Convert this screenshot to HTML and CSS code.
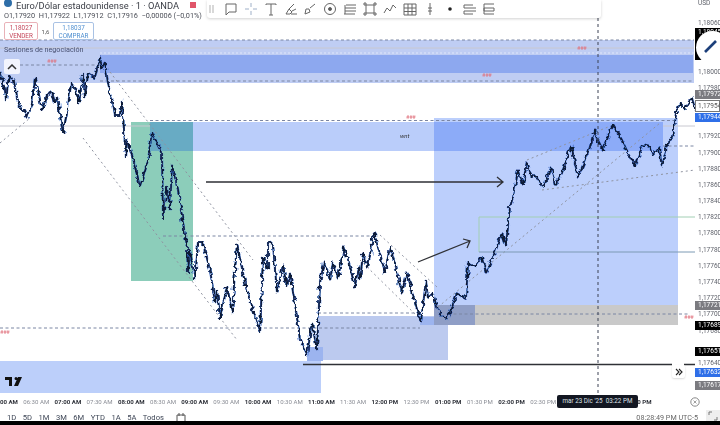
FILE: index.html
```html
<!DOCTYPE html>
<html lang="es">
<head>
<meta charset="utf-8">
<title>Euro/Dólar estadounidense</title>
<link rel="stylesheet" href="styles.css">
</head>
<body>
<div class="app">
  <div class="main">
    <div class="plot">
      <svg class="canvas" viewBox="0 0 695 395" width="695" height="395">
        <defs>
          <filter id="jag" filterUnits="userSpaceOnUse" x="0" y="0" width="695" height="395">
            <feTurbulence type="fractalNoise" baseFrequency="0.22" numOctaves="2" seed="4"/>
            <feDisplacementMap in="SourceGraphic" scale="6" xChannelSelector="R" yChannelSelector="G"/>
          </filter>
          <polyline id="price" fill="none" stroke-linejoin="bevel" points="0,72 5,90 6,100 9,75 13,83 15,80 17,98 21,110 24,110 27,118 32,103 35,78 38,90 42,110 47,95 52,92 55,103 57,97 63,133 68,107 71,83 75,88 79,103 83,75 85,97 88,73 95,78 100,57 102,68 105,62 108,83 110,93 113,102 115,115 120,115 122,100 124,130 126,158 127,140 132,155 140,187 148,160 152,132 157,143 162,153 163,220 167,187 170,210 172,165 178,190 183,223 187,247 188,273 190,250 195,280 198,243 203,243 210,270 215,303 217,290 220,318 227,287 232,313 237,243 245,283 260,333 263,257 268,270 268,243 273,245 277,293 283,265 287,287 290,273 297,317 300,340 307,355 312,323 317,350 320,283 324,262 330,280 333,262 338,278 344,247 350,267 355,287 358,267 360,280 363,253 368,267 374,232 378,247 385,273 390,247 395,263 402,293 407,272 415,303 421,322 426,280 428,298 433,293 438,310 447,320 457,293 466,298 468,263 475,267 482,257 486,273 492,260 498,243 502,233 506,245 510,207 513,197 518,170 523,185 527,162 532,178 535,175 543,188 551,167 555,185 562,173 571,145 578,177 588,153 595,130 598,140 603,150 608,137 613,125 622,140 628,153 635,165 643,145 650,147 653,155 659,147 662,167 668,142 673,138 676,113 680,103 685,108 692,97 695,110"/>
        </defs>

        <rect class="band-light" x="0" y="40" width="694" height="43"/>
        <rect class="band-deep" x="100" y="55" width="593" height="18"/>
        <rect class="big-blue" x="434" y="118" width="244" height="207"/>
        <rect class="lower-box" x="318" y="316" width="130" height="44"/>
        <rect class="grey-box" x="475" y="305" width="203" height="20"/>
        <rect class="grey-blue" x="434" y="305" width="41" height="20"/>
        <rect class="lower-deep" x="420" y="317" width="14" height="8"/>
        <rect class="green" x="131" y="122" width="62" height="159"/>
        <rect class="zone" x="193" y="122" width="241" height="29"/>
        <rect class="zone-green" x="150" y="122" width="43" height="29"/>
        <rect class="zone-deep" x="434" y="122" width="229" height="29"/>
        <rect class="bottom-blue" x="0" y="361" width="321" height="32"/>
        <rect class="lower-deep" x="307" y="347" width="16" height="14"/>

        <g class="hair">
          <line x1="0" y1="48" x2="694" y2="48"/>
          <line x1="0" y1="126" x2="150" y2="126"/>
          <line x1="663" y1="126" x2="695" y2="126"/>
        </g>
        <g class="dash">
          <line x1="0" y1="40" x2="694" y2="40"/>
          <line x1="100" y1="81" x2="694" y2="81"/>
          <line x1="20" y1="65" x2="100" y2="65"/>
          <line x1="150" y1="120.500" x2="676" y2="120.500"/>
          <line x1="163" y1="236" x2="378" y2="236"/>
          <line x1="0" y1="328" x2="420" y2="328"/>
          <line x1="448" y1="314" x2="690" y2="314"/>
          <line x1="318" y1="313" x2="420" y2="313"/>
          <line x1="663" y1="146" x2="695" y2="146"/>
        </g>
        <line class="dash-light" x1="100" y1="53" x2="694" y2="53"/>
        <g class="dots">
          <line x1="0" y1="143" x2="30" y2="118"/>
          <line x1="110" y1="72" x2="253" y2="260"/>
          <line x1="83" y1="138" x2="237" y2="340"/>
          <line x1="380" y1="235" x2="437" y2="287"/>
          <line x1="360" y1="260" x2="418" y2="317"/>
          <line x1="438" y1="307" x2="660" y2="123"/>
          <line x1="527" y1="160" x2="613" y2="125"/>
          <line x1="542" y1="190" x2="695" y2="170"/>
        </g>
        <path class="thin-green" d="M695 217H479V252"/>
        <path class="thin-blue" d="M479 252H695"/>

        <use href="#price" class="price-under" filter="url(#jag)"/>
        <use href="#price" class="price-over" filter="url(#jag)"/>

        <line class="cross" x1="598" y1="0" x2="598" y2="393"/>
        <g class="mark">
          <path d="M206 182H503M497 177l6 5-6 5"/>
          <path d="M418 262L470 241M463 239l7 2-3 7"/>
          <path d="M303 364.500H672M684 364.500H695"/>
        </g>
      </svg>

      <div class="legend">
        <div class="title-row">
          <span class="logo-dot"></span>
          <span class="title">Euro/Dólar estadounidense · 1 · OANDA</span>
          <span class="flag"></span>
          <span class="live"></span>
        </div>
        <div class="ohlc">O1,17920 &nbsp;H1,17922 &nbsp;L1,17912 &nbsp;C1,17916 &nbsp;−0,00006 (−0,01%)</div>
        <div class="trade">
          <div class="trade-btn sell"><b>1,18027</b><span>VENDER</span></div>
          <span class="spread">1,6</span>
          <div class="trade-btn buy"><b>1,18037</b><span>COMPRAR</span></div>
        </div>
        <div class="sessions">Sesiones de negociación</div>
        <div class="collapse">
          <svg width="10" height="6" viewBox="0 0 10 6"><path d="M1 5l4-4 4 4" fill="none" stroke="#333" stroke-width="1.5"/></svg>
        </div>
      </div>

      <div class="toolbar">
        <svg class="grip" width="6" height="10" viewBox="0 0 6 10"><path d="M1 1v8M4 1v8" stroke="#ccc" stroke-width="1.500"/></svg>
        <svg width="14" height="14" viewBox="0 0 14 14"><path d="M2 2h10v8H5l-3 3z"/></svg>
        <svg width="14" height="14" viewBox="0 0 14 14"><path d="M7 1v4M7 9v4M1 7h4M9 7h4" stroke="#9fb0c8"/></svg>
        <svg width="14" height="14" viewBox="0 0 14 14"><path d="M2 3V2h10v1M7 2v11M5 13h4"/></svg>
        <svg width="14" height="14" viewBox="0 0 14 14"><path d="M2 12l3-5 3 3-2 2zM5 7l5-5M7 12h6M8 9l4-2"/></svg>
        <svg width="14" height="14" viewBox="0 0 14 14"><path d="M2 12l1-5h3l1 3-5 2zM7 6l5-4"/></svg>
        <svg width="14" height="14" viewBox="0 0 14 14"><circle cx="7" cy="7" r="5.500"/><circle cx="7" cy="7" r="1.500" fill="#555"/></svg>
        <svg width="14" height="14" viewBox="0 0 14 14"><path d="M3 3h10M2 6h11M2 9h11M1 12h11M2 3v9"/></svg>
        <svg width="14" height="14" viewBox="0 0 14 14"><path d="M3 3h8v8H3z"/><path d="M1 1h2v2H1zM11 1h2v2h-2zM1 11h2v2H1zM11 11h2v2h-2z"/></svg>
        <svg width="14" height="14" viewBox="0 0 14 14"><path d="M1 11l3-5 3 3 3-6 3 3"/></svg>
        <svg width="14" height="14" viewBox="0 0 14 14"><path d="M1 2h12v11H1zM1 6h12M1 9.500h12M5 2v11M9 2v11"/></svg>
        <svg width="14" height="14" viewBox="0 0 14 14"><path d="M7 1v12M5 6h4M5 9h4"/></svg>
        <svg width="14" height="14" viewBox="0 0 14 14"><circle cx="7" cy="7" r="1.800" fill="#222" stroke="none"/></svg>
        <svg width="14" height="14" viewBox="0 0 14 14"><path d="M1 3h9M1 6h12M1 9h12M1 12h9M1 3v3M1 9v3"/></svg>
        <svg width="14" height="14" viewBox="0 0 14 14"><path d="M2 2h10M2 6h10v3H2zM2 12h10M2 2v10"/></svg>
      </div>

      <span class="tag tag-a">###</span>
      <span class="tag tag-b">###</span>
      <span class="tag tag-c">###</span>
      <span class="tag tag-d">###</span>
      <span class="tag tag-e">###</span>
      <span class="tag tag-f">###</span>
      <span class="zone-label">wnt</span>

      <svg class="tv-logo" width="17" height="10" viewBox="0 0 17 10"><path d="M0 0h7v9H4V3H0zM11 0a1.500 1.500 0 1 1 0 3 1.500 1.500 0 0 1 0-3zM13 0h4l-4 9h-4z" fill="#111"/></svg>
      <div class="scroll-btn">
        <svg width="8" height="8" viewBox="0 0 8 8"><path d="M1 1l3 3-3 3M4 1l3 3-3 3" fill="none" stroke="#222" stroke-width="1.100"/></svg>
      </div>
    </div>

    <div class="axis">
      <div class="usd">USD</div>
      <div class="ticks">
        <span>1,18060</span><i></i><i></i><span>1,18000</span><span>1,17980</span><span>1,17960</span><i></i><span>1,17920</span><span>1,17900</span><span>1,17880</span><span>1,17860</span><span>1,17840</span><span>1,17820</span><span>1,17800</span><span>1,17780</span><span>1,17760</span><span>1,17740</span><span>1,17720</span><span>1,17700</span><span>1,17680</span><i></i><span>1,17640</span><i></i>
      </div>
      <div class="badge b-black b-pen">
        <span>1,18045</span>
        <div class="pen">
          <svg width="16" height="16" viewBox="0 0 16 16"><path d="M2 14L13 3" stroke="#1c3f7a" stroke-width="2.600"/></svg>
        </div>
      </div>
      <div class="badge b-grey b1">1,17972</div>
      <div class="badge b-white b2">1,17954</div>
      <div class="badge b-blue b3">1,17944</div>
      <div class="badge b-grey b4">1,17721</div>
      <div class="badge b-black b5">1,17689</div>
      <div class="badge b-black b6">1,17651</div>
      <div class="badge b-blue b7">1,17632</div>
      <div class="badge b-grey b8">1,17617</div>
    </div>
  </div>

  <div class="timebar">
    <div class="times">
      <b>06:00 AM</b><span>06:30 AM</span><b>07:00 AM</b><span>07:30 AM</span><b>08:00 AM</b><span>08:30 AM</span><b>09:00 AM</b><span>09:30 AM</span><b>10:00 AM</b><span>10:30 AM</span><b>11:00 AM</b><span>11:30 AM</span><b>12:00 PM</b><span>12:30 PM</span><b>01:00 PM</b><span>01:30 PM</span><b>02:00 PM</b><span>02:30 PM</span><i></i><i></i><b>04:00 PM</b>
    </div>
    <div class="crosstip">mar 23 Dic '25 &nbsp;03:22 PM</div>
    <svg class="axis-gear" width="10" height="10" viewBox="0 0 10 10"><circle cx="5" cy="5" r="4.200" fill="none" stroke="#888"/><path d="M3.500 3.500l3 3M6.500 3.500l-3 3" stroke="#888" stroke-width=".8"/></svg>
  </div>

  <div class="rangebar">
    <div class="ranges">
      <span>1D</span><span>5D</span><span>1M</span><span>3M</span><span>6M</span><span>YTD</span><span>1A</span><span>5A</span><span>Todos</span>
      <svg width="10" height="10" viewBox="0 0 10 10"><path d="M1 2h8v7H1zM3 0v3M7 0v3" fill="none" stroke="#555"/></svg>
    </div>
    <div class="clock">08:28:49 PM UTC-5</div>
    <div class="corner">
      <svg width="10" height="10" viewBox="0 0 10 10"><path d="M1 4V1h3M9 6v3H6" fill="none" stroke="#777"/></svg>
    </div>
  </div>
  <div class="blackbar"></div>
</div>
</body>
</html>
```
FILE: styles.css
```css
* { box-sizing: border-box; }
html, body { margin: 0; padding: 0; background: #fff; }
body { width: 720px; height: 425px; overflow: hidden; font-family: "Roboto", "Liberation Sans", sans-serif; color: #333; }

.app { width: 720px; height: 425px; display: flex; flex-direction: column; overflow: hidden; filter: blur(.45px); }
.main { display: flex; height: 395px; flex: none; }
.plot { position: relative; width: 695px; flex: none; overflow: hidden; }
.canvas { position: absolute; inset: 0; display: block; }

.band-light { fill: #bfcdf3; }
.band-deep { fill: #8da8ef; }
.big-blue { fill: #bccffc; }
.lower-box { fill: #bccaef; }
.grey-box { fill: #c9c9c9; }
.grey-blue { fill: #8f9ec6; }
.lower-deep { fill: #9cb4ef; }
.green { fill: #8ccdba; }
.zone { fill: #bacdfa; }
.zone-green { fill: #68abc4; }
.zone-deep { fill: #8cabf8; }
.bottom-blue { fill: #bccffa; }

.hair line { stroke: #c8c8d0; stroke-width: 1; }
.dash line { stroke: #7b86a3; stroke-width: 1; stroke-dasharray: 3 2.500; }
.dash-light { stroke: #dfe6fb; stroke-width: 1; stroke-dasharray: 2 2; }
.dots line { stroke: #8f93a0; stroke-width: 1; stroke-dasharray: 2 3; }
.thin-green { fill: none; stroke: #a2cfb4; stroke-width: 1; }
.thin-blue { fill: none; stroke: #7d9ab4; stroke-width: 1; }
.price-under { stroke: #3d72d4; stroke-width: 2.200; }
.price-over { stroke: #101a36; stroke-width: 1.500; }
.cross { stroke: #3c4254; stroke-width: 1; stroke-dasharray: 3 3; }
.mark path { fill: none; stroke: #2f3136; stroke-width: 1.300; }

.legend { position: absolute; left: 0; top: 0; width: 200px; padding: 0 0 0 4px; display: flex; flex-direction: column; }
.title-row { display: flex; align-items: center; height: 10px; white-space: nowrap; }
.logo-dot { width: 8px; height: 8px; border-radius: 50%; background: #2e6ea8; margin: -4px 4px 0 0; flex: none; }
.title { font-size: 9.300px; color: #3a3d45; }
.flag { width: 6px; height: 6px; background: #e0566a; margin-left: 11px; flex: none; }
.live { width: 6px; height: 6px; border-radius: 50%; background: #27a58a; margin-left: 15px; flex: none; }
.ohlc { font-size: 7.300px; color: #4b4e57; margin-top: 1px; height: 10px; line-height: 10px; white-space: nowrap; }
.trade { display: flex; align-items: center; margin-top: 1px; }
.trade-btn { width: 34px; height: 18px; border-radius: 2px; background: #fff; display: flex; flex-direction: column; align-items: center; font-size: 6.300px; line-height: 8px; padding-top: 1px; }
.trade-btn b { font-weight: 400; }
.sell { border: 1px solid #e9b2b8; color: #c4465a; }
.buy { width: 41px; border: 1px solid #a9c2e4; color: #4f8fd0; }
.spread { width: 15px; text-align: center; font-size: 6px; color: #555; }
.sessions { font-size: 7.200px; color: #4a5272; margin-top: 5px; height: 10px; line-height: 10px; white-space: nowrap; }
.collapse { width: 16px; height: 15px; margin-top: 4px; background: #f2f4fd; border-radius: 2px; display: flex; align-items: center; justify-content: center; }

.toolbar { position: absolute; left: 207px; top: 0; width: 394px; height: 18px; background: #fff; border-radius: 0 0 3px 3px; box-shadow: 0 1px 3px rgba(0,0,0,.18); display: flex; align-items: center; padding-left: 2px; gap: 5.900px; }
.toolbar svg { flex: none; fill: none; stroke: #666; stroke-width: 1; }
.toolbar .grip { margin-right: 3px; }

.tag { position: absolute; font-size: 5.500px; line-height: 6px; color: #e0707c; letter-spacing: -.2px; }
.tag-a { left: 47px; top: 58px; }
.tag-b { left: 482px; top: 72px; }
.tag-c { left: 406px; top: 114px; }
.tag-d { left: 577px; top: 45px; }
.tag-e { left: 0; top: 329px; }
.tag-f { left: 684px; top: 314px; }
.zone-label { position: absolute; left: 400px; top: 133px; font-size: 6px; line-height: 6px; font-style: italic; color: #333; }
.tv-logo { position: absolute; left: 5px; top: 377px; }
.scroll-btn { position: absolute; left: 672px; top: 365px; width: 13px; height: 13px; background: #fff; border-radius: 2px; box-shadow: 0 1px 2px rgba(0,0,0,.15); display: flex; align-items: center; justify-content: center; }

.axis { position: relative; flex: 1; font-size: 6.500px; color: #5f626b; background: #fff; padding-left: 3px; overflow: hidden; }
.usd { height: 14px; line-height: 8px; margin-top: -1px; }
.ticks { display: grid; grid-auto-rows: 16.200px; margin-top: 5px; white-space: nowrap; }
.ticks span { line-height: 10px; }
.badge { position: absolute; left: 0; right: 0; height: 9px; line-height: 9px; font-size: 6.500px; padding-left: 3px; color: #fff; white-space: nowrap; }
.b-black { background: #000; }
.b-grey { background: #7b7b80; }
.b-blue { background: #2f6fe8; }
.b-white { background: #fff; color: #555; border: 1px solid #777; height: 12px; line-height: 10px; padding-left: 2px; }
.b-pen { top: 28px; height: 32px; }
.pen { position: absolute; left: 1px; top: 3px; width: 33px; height: 33px; border-radius: 50%; background: #fff; display: flex; align-items: center; justify-content: center; }
.pen svg { margin-left: -4px; margin-top: -4px; }
.b1 { top: 90px; }
.b2 { top: 100px; }
.b3 { top: 113px; }
.b4 { top: 301px; }
.b5 { top: 321px; }
.b6 { top: 347px; }
.b7 { top: 368px; }
.b8 { top: 381px; }

.timebar { position: relative; height: 15px; flex: none; overflow: hidden; }
.times { display: flex; margin-left: -11.300px; padding-top: 1px; white-space: nowrap; font-size: 6.100px; color: #8a8d95; line-height: 12px; }
.times b, .times span, .times i { width: 31.700px; flex: none; text-align: center; }
.times b { color: #30333b; font-weight: 700; }
.crosstip { position: absolute; left: 557px; top: 0; width: 81px; height: 13px; background: #131722; color: #dfe1e6; font-size: 6.300px; line-height: 13px; text-align: center; border-radius: 2px; white-space: nowrap; }
.axis-gear { position: absolute; left: 690px; top: 2px; }

.rangebar { display: flex; align-items: flex-start; height: 11px; flex: none; position: relative; overflow: hidden; padding-top: 3px; }
.ranges { display: flex; align-items: center; padding-left: 7px; font-size: 7.600px; line-height: 10px; color: #3e4656; white-space: nowrap; gap: 6.500px; }
.ranges svg { margin-left: 6px; }
.clock { margin-left: auto; margin-right: 22px; font-size: 7.200px; line-height: 10px; color: #666; white-space: nowrap; }
.corner { position: absolute; right: 0; top: 0; width: 14px; height: 11px; background: #eee; display: flex; align-items: center; justify-content: center; }
.blackbar { flex: 1; background: #000; min-height: 4px; }
```
